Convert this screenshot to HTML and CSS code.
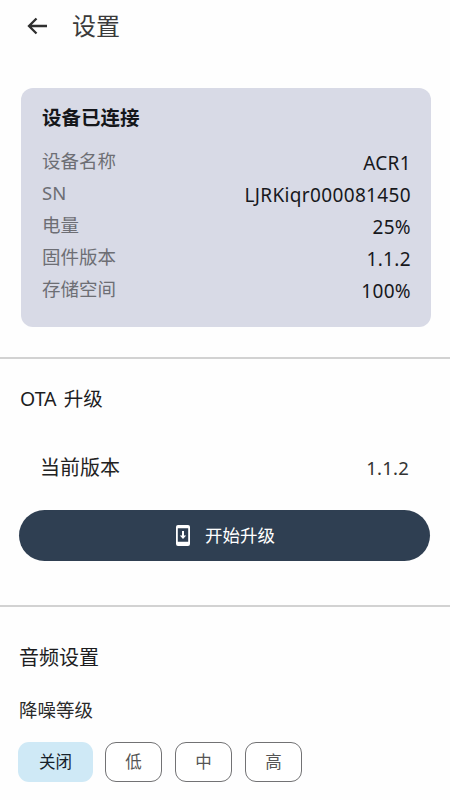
FILE: index.html
```html
<!DOCTYPE html>
<html lang="zh">
<head>
<meta charset="utf-8">
<title>设置</title>
<link rel="stylesheet" href="styles.css">
</head>
<body>
<div class="page">
  <header class="topbar">
    <svg class="back" viewBox="0 0 24 24" width="24" height="24" aria-hidden="true"><path d="M22 12H4M11.500 4.500L4 12l7.500 7.500" fill="none" stroke="#2f2f2f" stroke-width="2.300"/></svg>
    <h1 class="title">设置</h1>
  </header>
  <section class="card">
    <h2 class="card-title">设备已连接</h2>
    <div class="row"><span class="label">设备名称</span><span class="value">ACR1</span></div>
    <div class="row"><span class="label">SN</span><span class="value">LJRKiqr000081450</span></div>
    <div class="row"><span class="label">电量</span><span class="value">25%</span></div>
    <div class="row"><span class="label">固件版本</span><span class="value">1.1.2</span></div>
    <div class="row"><span class="label">存储空间</span><span class="value">100%</span></div>
  </section>
  <hr class="divider first">
  <section class="ota">
    <h2 class="section-title ota-title">OTA 升级</h2>
    <div class="version"><span class="version-label">当前版本</span><span class="version-value">1.1.2</span></div>
    <button class="upgrade" type="button">
      <svg viewBox="0 0 14 21" width="14" height="21" aria-hidden="true"><path fill-rule="evenodd" fill="#fff" d="M2 0h10a2 2 0 0 1 2 2v17a2 2 0 0 1-2 2H2a2 2 0 0 1-2-2V2a2 2 0 0 1 2-2zM1.800 3.200v13.600h10.400V3.200z"/><path fill="#fff" d="M6 6h2v4.500h2.200L7 14 3.800 10.500H6z"/></svg>
      <span class="upgrade-text">开始升级</span>
    </button>
  </section>
  <hr class="divider second">
  <section class="audio">
    <h2 class="section-title audio-title">音频设置</h2>
    <div class="anc-label">降噪等级</div>
    <div class="chips">
      <button class="chip active" type="button">关闭</button>
      <button class="chip" type="button">低</button>
      <button class="chip" type="button">中</button>
      <button class="chip" type="button">高</button>
    </div>
  </section>
</div>
</body>
</html>
```
FILE: styles.css
```css
* { box-sizing: border-box; }
html, body { margin: 0; padding: 0; background: #fefefe; }
body {
  font-family: "Noto Sans", "Noto Sans CJK SC", sans-serif;
  color: #1d1d1f;
}
.page { width: 450px; height: 800px; overflow: hidden; }
.topbar { height: 52px; display: flex; align-items: center; padding-left: 25px; }
.back { flex: none; }
.title { margin: 0 0 0 23px; font-size: 24px; font-weight: 400; line-height: 32px; color: #3a3a3a; }
.card {
  margin: 36px 19px 0 21px;
  height: 239px;
  padding: 15px 20px 0 21px;
  background: #d8dae6;
  border-radius: 12px;
}
.card-title { margin: 0 0 13px; font-size: 19.500px; font-weight: 700; line-height: 30px; color: #15161a; }
.row { display: flex; justify-content: space-between; align-items: center; height: 32px; }
.label { font-size: 18.500px; color: #6d6e74; line-height: 28px; margin-top: -2px; }
.value { font-size: 19px; letter-spacing: 0.350px; color: #17181c; line-height: 28px; margin-top: 1px; }
.divider { margin: 0; border: 0; height: 2px; background: #d2d2d2; }
.divider.first { margin-top: 30px; }
.divider.second { margin-top: 44px; }
.ota { padding: 0 20px 0 19px; }
.section-title { margin: 0; font-weight: 400; color: #1d1d1f; line-height: 28px; }
.ota-title { margin: 26px 0 0 1px; font-size: 19.500px; word-spacing: 2px; }
.version { display: flex; justify-content: space-between; align-items: center; margin: 39px 21px 0 21px; height: 28px; }
.version-label { font-size: 20px; color: #222; }
.version-value { font-size: 18.500px; letter-spacing: 0.200px; color: #333; margin-top: 2px; }
.upgrade {
  display: flex; align-items: center; justify-content: center; gap: 15px;
  width: 411px; height: 51px; margin-top: 30px; padding: 0 0 0 2px;
  border: 0; border-radius: 26px; background: #2f3f52; color: #fff;
  font: inherit; font-size: 17.500px;
}
.upgrade-text { margin-top: -3px; }
.audio { padding: 0 0 0 18px; }
.audio-title { margin: 37px 0 0 1px; font-size: 20px; }
.anc-label { margin: 24px 0 0 1px; font-size: 18.500px; line-height: 28px; color: #2a2a2a; }
.chips { display: flex; gap: 13px; margin-top: 18px; }
.chip {
  width: 57px; height: 40px; padding: 0 0 3px;
  border: 1.500px solid #727274; border-radius: 11px;
  background: #fff; color: #555; font: inherit; font-size: 16.500px;
}
.chip.active { width: 75px; margin-right: -1px; border: 0; background: #cfe9f6; color: #16212b; }
```
